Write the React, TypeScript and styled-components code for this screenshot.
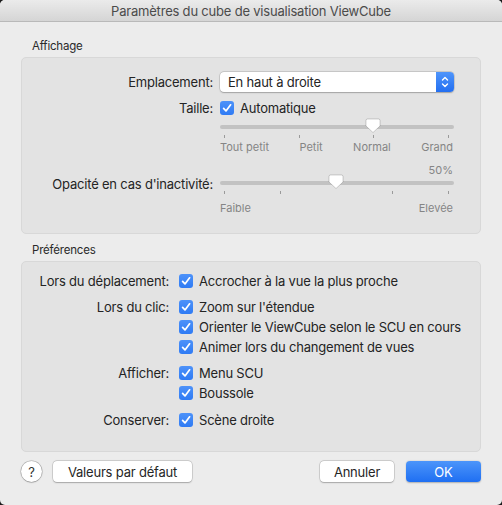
import React from "react";
import styled, { createGlobalStyle } from "styled-components";

const Global = createGlobalStyle`
  html, body { margin: 0; padding: 0; background: #1b1b1b; }
  body { font-family: Inter, "Noto Sans", "Liberation Sans", sans-serif; }
  * { box-sizing: border-box; }
`;

const Window = styled.div`
  width: 502px;
  height: 505px;
  background: #ececec;
  border-radius: 5px;
  overflow: hidden;
  display: flex;
  flex-direction: column;
  color: #242424;
  font-size: 13px;
  letter-spacing: -0.2px;
`;

const TitleBar = styled.div`
  height: 22px;
  flex: none;
  background: linear-gradient(#ebebeb, #d5d5d5);
  border-bottom: 1px solid #b9b9b9;
  display: flex;
  align-items: center;
  justify-content: center;
  font-size: 13px;
  color: #4b4b4b;
`;

const Content = styled.div`
  flex: 1;
  padding: 0 21px 0 21px;
  display: flex;
  flex-direction: column;
`;

const GroupTitle = styled.div<{ $top: number }>`
  margin-top: ${(p) => p.$top}px;
  padding-left: 11px;
  height: 15px;
  line-height: 15px;
  font-size: 11.5px;
  color: #2a2a2a;
`;

const Box = styled.div<{ $h: number }>`
  margin-top: 3px;
  height: ${(p) => p.$h}px;
  background: #e3e3e3;
  border: 1px solid #d8d8d8;
  border-radius: 5px;
`;

const DisplayGrid = styled.div`
  display: grid;
  grid-template-columns: 191px 1fr;
  column-gap: 7px;
  padding: 14px 26px 0 0;
  align-items: center;
`;

const Label = styled.div<{ $mt?: number; $col?: number; $start?: boolean }>`
  text-align: right;
  white-space: nowrap;
  margin-top: ${(p) => p.$mt ?? 0}px;
  ${(p) => (p.$col ? `grid-column: ${p.$col};` : "")}
  ${(p) => (p.$start ? "align-self: start;" : "")}
`;

const Popup = styled.div`
  height: 20px;
  background: #fff;
  border-radius: 4px;
  box-shadow: 0 0 0 0.5px rgba(0, 0, 0, 0.18), 0 0.5px 1.5px rgba(0, 0, 0, 0.22);
  display: flex;
  align-items: center;
  justify-content: space-between;
  padding-left: 8px;
  overflow: hidden;
`;

const Stepper = styled.div`
  width: 18px;
  height: 20px;
  background: linear-gradient(#4f95fb, #236ff1);
  display: flex;
  align-items: center;
  justify-content: center;
`;

const CheckCell = styled.div<{ $mt?: number }>`
  margin-top: ${(p) => p.$mt ?? 0}px;
`;

const CheckRow = styled.div`
  display: flex;
  align-items: center;
  gap: 6px;
  height: 20px;
  white-space: nowrap;
`;

const Check = styled.div`
  width: 14px;
  height: 14px;
  border-radius: 3px;
  background: linear-gradient(#4d92f9, #2f7bf4);
  display: flex;
  align-items: center;
  justify-content: center;
  flex: none;
`;

const SliderWrap = styled.div<{ $mt: number }>`
  grid-column: 2;
  align-self: start;
  margin-top: ${(p) => p.$mt}px;
  position: relative;
`;

const Track = styled.div`
  height: 4px;
  border-radius: 2px;
  background: #c2c2c2;
  margin-top: 5px;
`;

const Thumb = styled.div`
  position: absolute;
  top: -2px;
  width: 16px;
  height: 16px;
  transform: translateX(-50%);
`;

const Ticks = styled.div`
  display: flex;
  justify-content: space-between;
  padding: 0 5px 0 4px;
  margin-top: 6px;
  height: 3px;
`;

const Tick = styled.div<{ $hidden?: boolean }>`
  width: 1px;
  height: 3px;
  background: ${(p) => (p.$hidden ? "transparent" : "#9a9a9a")};
`;

const ScaleLabels = styled.div<{ $mt: number }>`
  grid-column: 2;
  display: flex;
  justify-content: space-between;
  margin-top: ${(p) => p.$mt}px;
  font-size: 11px;
  color: #858585;
  padding-right: 1px;
  letter-spacing: 0;
`;

const Percent = styled.div<{ $mt: number }>`
  grid-column: 2;
  text-align: right;
  font-size: 11px;
  color: #858585;
  margin-top: ${(p) => p.$mt}px;
  padding-right: 1px;
  height: 14px;
  line-height: 14px;
  letter-spacing: 0;
`;

const PrefGrid = styled.div`
  display: grid;
  grid-template-columns: 147px 1fr;
  column-gap: 10px;
  padding-top: 9px;
`;

const PrefLabel = styled(Label)`
  grid-column: 1;
  height: 20px;
  line-height: 20px;
  align-self: start;
`;

const PrefItems = styled.div<{ $mt: number }>`
  grid-column: 2;
  margin-top: ${(p) => p.$mt}px;
  display: flex;
  flex-direction: column;
`;

const Footer = styled.div`
  display: flex;
  align-items: center;
  margin-top: 9px;
  height: 21px;
`;

const Help = styled.div`
  width: 21px;
  height: 21px;
  border-radius: 50%;
  background: #fff;
  box-shadow: 0 0 0 0.5px rgba(0, 0, 0, 0.25), 0 0.5px 1.5px rgba(0, 0, 0, 0.25);
  display: flex;
  align-items: center;
  justify-content: center;
  font-size: 13px;
  color: #333;
`;

const Button = styled.div<{ $w: number; $primary?: boolean }>`
  width: ${(p) => p.$w}px;
  height: 21px;
  border-radius: 4px;
  display: flex;
  align-items: center;
  justify-content: center;
  font-size: 13px;
  background: ${(p) => (p.$primary ? "linear-gradient(#4c95fa, #1f6ff2)" : "#fff")};
  color: ${(p) => (p.$primary ? "#fff" : "#262626")};
  box-shadow: ${(p) =>
    p.$primary
      ? "0 0.5px 1.5px rgba(0,0,0,0.25)"
      : "0 0 0 0.5px rgba(0,0,0,0.2), 0 0.5px 1.5px rgba(0,0,0,0.22)"};
`;

const Spacer = styled.div<{ $w?: number }>`
  ${(p) => (p.$w ? `width: ${p.$w}px; flex: none;` : "flex: 1;")}
`;

const CheckMark = () => (
  <svg width="10" height="10" viewBox="0 0 10 10">
    <path d="M1.6 5.3 L4 7.9 L8.6 1.8" fill="none" stroke="#fff" strokeWidth="1.7" strokeLinecap="round" strokeLinejoin="round" />
  </svg>
);

const CheckItem = ({ text }: { text: string }) => (
  <CheckRow>
    <Check>
      <CheckMark />
    </Check>
    <span>{text}</span>
  </CheckRow>
);

const ThumbShape = () => (
  <svg width="16" height="16" viewBox="0 0 16 16">
    <path
      d="M2.5 1 H13.5 Q15 1 15 2.5 V8 L8 14.5 L1 8 V2.5 Q1 1 2.5 1 Z"
      fill="#fff"
      stroke="rgba(0,0,0,0.22)"
      strokeWidth="0.8"
    />
  </svg>
);

const Slider = ({ ticks, pos, hidden, mt }: { ticks: number; pos: number; hidden?: number; mt: number }) => (
  <SliderWrap $mt={mt}>
    <Track />
    <Thumb style={{ left: `${pos}px` }}>
      <ThumbShape />
    </Thumb>
    <Ticks>
      {Array.from({ length: ticks }).map((_, i) => (
        <Tick key={i} $hidden={i === hidden} />
      ))}
    </Ticks>
  </SliderWrap>
);

export default function App() {
  return (
    <>
      <Global />
      <Window>
        <TitleBar>Paramètres du cube de visualisation ViewCube</TitleBar>
        <Content>
          <GroupTitle $top={17}>Affichage</GroupTitle>
          <Box $h={177}>
            <DisplayGrid>
              <Label>Emplacement:</Label>
              <Popup>
                <span>En haut à droite</span>
                <Stepper>
                  <svg width="10" height="14" viewBox="0 0 10 14">
                    <path d="M2.5 5 L5 2.5 L7.5 5 M2.5 9 L5 11.5 L7.5 9" fill="none" stroke="#fff" strokeWidth="1.4" strokeLinecap="round" strokeLinejoin="round" />
                  </svg>
                </Stepper>
              </Popup>
              <Label $mt={6}>Taille:</Label>
              <CheckCell $mt={6}>
                <CheckItem text="Automatique" />
              </CheckCell>
              <Slider ticks={4} pos={153} hidden={-1} mt={2} />
              <ScaleLabels $mt={2}>
                <span>Tout petit</span>
                <span>Petit</span>
                <span>Normal</span>
                <span>Grand</span>
              </ScaleLabels>
              <Percent $mt={9}>50%</Percent>
              <Label $col={1} $mt={-1} $start>Opacité en cas d'inactivité:</Label>
              <Slider ticks={5} pos={116} hidden={2} mt={-1.5} />
              <ScaleLabels $mt={7.5}>
                <span>Faible</span>
                <span>Elevée</span>
              </ScaleLabels>
            </DisplayGrid>
          </Box>
          <GroupTitle $top={9}>Préférences</GroupTitle>
          <Box $h={191}>
            <PrefGrid>
              <PrefLabel>Lors du déplacement:</PrefLabel>
              <PrefItems $mt={0}>
                <CheckItem text="Accrocher à la vue la plus proche" />
              </PrefItems>
              <PrefLabel $mt={6}>Lors du clic:</PrefLabel>
              <PrefItems $mt={6}>
                <CheckItem text="Zoom sur l'étendue" />
                <CheckItem text="Orienter le ViewCube selon le SCU en cours" />
                <CheckItem text="Animer lors du changement de vues" />
              </PrefItems>
              <PrefLabel $mt={6}>Afficher:</PrefLabel>
              <PrefItems $mt={6}>
                <CheckItem text="Menu SCU" />
                <CheckItem text="Boussole" />
              </PrefItems>
              <PrefLabel $mt={7}>Conserver:</PrefLabel>
              <PrefItems $mt={7}>
                <CheckItem text="Scène droite" />
              </PrefItems>
            </PrefGrid>
          </Box>
          <Footer>
            <Help>?</Help>
            <Spacer $w={11} />
            <Button $w={139}>Valeurs par défaut</Button>
            <Spacer />
            <Button $w={74}>Annuler</Button>
            <Spacer $w={12} />
            <Button $w={75} $primary>OK</Button>
          </Footer>
        </Content>
      </Window>
    </>
  );
}
